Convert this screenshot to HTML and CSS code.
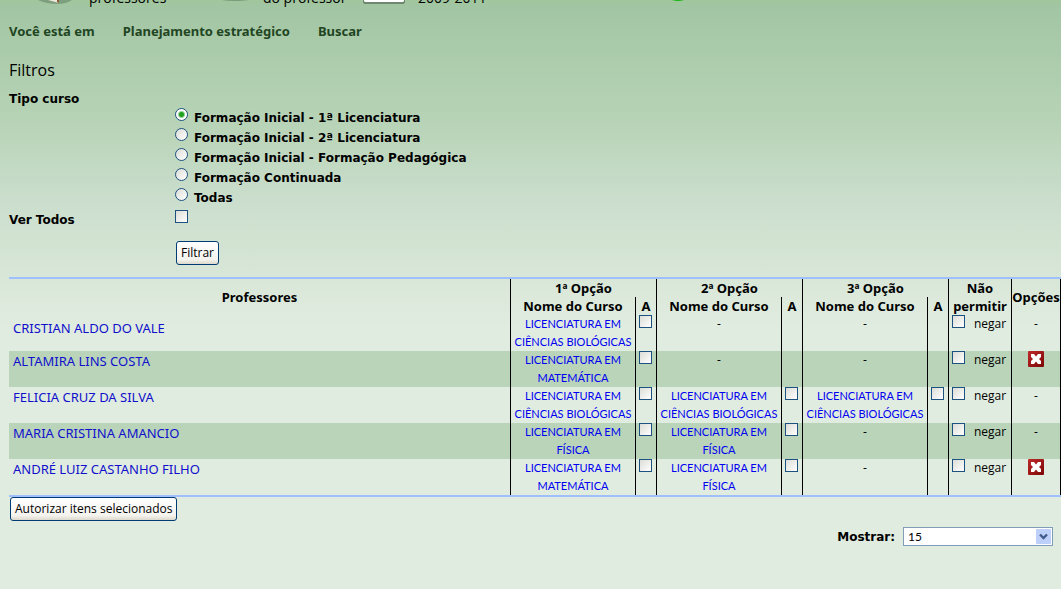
FILE: index.html
```
<!DOCTYPE html>
<html lang="pt-BR">
<head>
<meta charset="utf-8">
<title>Planejamento estratégico - Buscar</title>
<link rel="stylesheet" href="styles.css">
</head>
<body>
<svg class="defs" width="0" height="0" aria-hidden="true">
  <defs>
    <linearGradient id="red" x1="0" y1="0" x2="1" y2="1"><stop offset="0" stop-color="#c02a2a"/><stop offset="1" stop-color="#7c0606"/></linearGradient>
    <symbol id="delete" viewBox="0 0 16 16">
      <rect width="16" height="16" rx="1" fill="url(#red)"/>
      <path d="M3 3h3l2 2.500L10 3h3v3l-2 2L13 10v3h-3L8 10.500 6 13H3v-3l2-2L3 6z" fill="#fff"/>
    </symbol>
  </defs>
</svg>
<header class="banner">
  <svg class="banner-icon" width="79" height="8" viewBox="0 0 79 8" aria-hidden="true">
    <path d="M28 0h34q-6 4-14 4Q36 4 28 0z" fill="#6f8f70" opacity=".7"/>
    <path d="M38 0h11v3z" fill="#eee8dc"/><path d="M47 0h2v3l-2-1z" fill="#8a5a34"/>
  </svg>
  <span class="banner-text">professores</span>
  <svg class="banner-icon" width="76" height="8" viewBox="0 0 76 8" aria-hidden="true"><path d="M34 0h28q-14 2-28 0z" fill="#6f8f70" opacity=".8"/></svg>
  <span class="banner-text">do professor</span>
  <svg class="banner-icon" width="50" height="8" viewBox="0 0 50 8" aria-hidden="true"><path d="M4 0v2q0 2 3 2h36q3 0 3-2V0z" fill="#6f8970"/><path d="M5 0v1q0 1 2 1h36q2 0 2-1V0z" fill="#fff"/></svg>
  <span class="banner-text">2009-2011</span>
  <svg class="banner-icon" width="20" height="8" viewBox="0 0 20 8" aria-hidden="true"><path d="M4 0h12q-6 2-12 0z" fill="#14b814"/></svg>
</header>
<nav class="crumbs" aria-label="Você está em">
  <span>Você está em</span>
  <a href="#plan">Planejamento estratégico</a>
  <a href="#buscar">Buscar</a>
</nav>
<main>
  <form class="filters">
    <h1>Filtros</h1>
    <fieldset class="field">
      <legend>Tipo curso</legend>
      <div class="choices">
        <label><input type="radio" name="tipo" checked><span>Formação Inicial - 1ª Licenciatura</span></label>
        <label><input type="radio" name="tipo"><span>Formação Inicial - 2ª Licenciatura</span></label>
        <label><input type="radio" name="tipo"><span>Formação Inicial - Formação Pedagógica</span></label>
        <label><input type="radio" name="tipo"><span>Formação Continuada</span></label>
        <label><input type="radio" name="tipo"><span>Todas</span></label>
      </div>
    </fieldset>
    <div class="row">
      <label for="todos">Ver Todos</label>
      <input type="checkbox" id="todos">
    </div>
    <div class="submit"><button type="button">Filtrar</button></div>
  </form>
  <form class="results">
    <table>
      <colgroup><col><col class="c-course"><col class="c-a"><col class="c-course"><col class="c-a"><col class="c-course"><col class="c-a"><col class="c-deny"><col class="c-opt"></colgroup>
      <thead>
        <tr><th rowspan="2">Professores</th><th colspan="2">1ª Opção</th><th colspan="2">2ª Opção</th><th colspan="2">3ª Opção</th><th rowspan="2">Não permitir</th><th rowspan="2">Opções</th></tr>
        <tr><th>Nome do Curso</th><th>A</th><th>Nome do Curso</th><th>A</th><th>Nome do Curso</th><th>A</th></tr>
      </thead>
      <tbody>
        <tr><td class="name"><a href="#p1">CRISTIAN ALDO DO VALE</a></td>
          <td><a href="#c">LICENCIATURA EM CIÊNCIAS BIOLÓGICAS</a></td><td class="tick"><input type="checkbox" aria-label="Autorizar 1ª opção"></td>
          <td>-</td><td></td><td>-</td><td></td>
          <td class="deny"><label><input type="checkbox"><span>negar</span></label></td><td>-</td></tr>
        <tr><td class="name"><a href="#p2">ALTAMIRA LINS COSTA</a></td>
          <td><a href="#c">LICENCIATURA EM MATEMÁTICA</a></td><td class="tick"><input type="checkbox" aria-label="Autorizar 1ª opção"></td>
          <td>-</td><td></td><td>-</td><td></td>
          <td class="deny"><label><input type="checkbox"><span>negar</span></label></td><td><button type="button" class="remove" aria-label="Remover"><svg width="16" height="16"><use href="#delete"/></svg></button></td></tr>
        <tr><td class="name"><a href="#p3">FELICIA CRUZ DA SILVA</a></td>
          <td><a href="#c">LICENCIATURA EM CIÊNCIAS BIOLÓGICAS</a></td><td class="tick"><input type="checkbox" aria-label="Autorizar 1ª opção"></td>
          <td><a href="#c">LICENCIATURA EM CIÊNCIAS BIOLÓGICAS</a></td><td class="tick"><input type="checkbox" aria-label="Autorizar 2ª opção"></td>
          <td><a href="#c">LICENCIATURA EM CIÊNCIAS BIOLÓGICAS</a></td><td class="tick"><input type="checkbox" aria-label="Autorizar 3ª opção"></td>
          <td class="deny"><label><input type="checkbox"><span>negar</span></label></td><td>-</td></tr>
        <tr><td class="name"><a href="#p4">MARIA CRISTINA AMANCIO</a></td>
          <td><a href="#c">LICENCIATURA EM FÍSICA</a></td><td class="tick"><input type="checkbox" aria-label="Autorizar 1ª opção"></td>
          <td><a href="#c">LICENCIATURA EM FÍSICA</a></td><td class="tick"><input type="checkbox" aria-label="Autorizar 2ª opção"></td>
          <td>-</td><td></td>
          <td class="deny"><label><input type="checkbox"><span>negar</span></label></td><td>-</td></tr>
        <tr><td class="name"><a href="#p5">ANDRÉ LUIZ CASTANHO FILHO</a></td>
          <td><a href="#c">LICENCIATURA EM MATEMÁTICA</a></td><td class="tick"><input type="checkbox" aria-label="Autorizar 1ª opção"></td>
          <td><a href="#c">LICENCIATURA EM FÍSICA</a></td><td class="tick"><input type="checkbox" aria-label="Autorizar 2ª opção"></td>
          <td>-</td><td></td>
          <td class="deny"><label><input type="checkbox"><span>negar</span></label></td><td><button type="button" class="remove" aria-label="Remover"><svg width="16" height="16"><use href="#delete"/></svg></button></td></tr>
      </tbody>
    </table>
    <button type="button" class="authorize">Autorizar itens selecionados</button>
    <div class="pager">
      <label for="mostrar">Mostrar:</label>
      <div class="select">
        <select id="mostrar"><option>15</option><option>30</option></select>
        <svg class="arrow" width="15" height="15" viewBox="0 0 15 15" aria-hidden="true"><rect width="15" height="15" rx="1" fill="#bdd0fa"/><path d="M4 5.500l3.500 3.500L11 5.500" fill="none" stroke="#405a8c" stroke-width="2.400"/></svg>
      </div>
    </div>
  </form>
</main>
</body>
</html>
```
FILE: styles.css
```
* { box-sizing: border-box; }
body {
  margin: 0;
  min-height: 100vh;
  font: 12px/18px "Open Sans", sans-serif;
  color: #000;
  background: #e1ece0 linear-gradient(#a1c69c 0, #a2c5a4 8px, #a8caa9 40px, #b9d4b8 130px, #cbdecd 200px, #d6e5d5 265px, #e1ece0 328px) no-repeat;
}
.defs { position: absolute; }
a { color: #0000f0; text-decoration: none; }
.banner {
  display: grid;
  grid-template-columns: 79px 98px 76px 96px 59px 250px 20px;
  grid-template-rows: 8px;
  padding-left: 10px;
}
.banner-text {
  font: 14px/20px "Open Sans", sans-serif;
  align-self: end;
  white-space: nowrap;
}
.crumbs {
  display: flex;
  gap: 28px;
  padding: 14px 9px 0;
  font: bold 13px/18px "Noto Sans", sans-serif;
  color: #1f4522;
}
.crumbs a { color: inherit; }
.filters {
  padding: 19px 9px 12px;
  font: bold 12px/20px "DejaVu Sans", sans-serif;
}
h1 { margin: 0 0 9px; font: 16px/22px "Open Sans", sans-serif; }
.field { margin: 0; padding: 0; border: 0; }
legend { padding: 0; line-height: 18px; }
.choices { display: grid; padding: 0 0 2px 166px; }
.choices label { display: flex; gap: 6px; }
input {
  appearance: none;
  flex: none;
  display: block;
  width: 13px;
  height: 13px;
  margin: 0;
  border: 1px solid #1c5180;
  background: linear-gradient(135deg, #dcdcd7, #fff);
}
input[type="radio"] { border-radius: 50%; }
input[type="radio"]:checked { background: radial-gradient(circle, #21a121 0 2px, #fff 4px); }
.row { display: grid; grid-template-columns: 160px auto; column-gap: 6px; justify-content: start; }
.submit { padding: 11px 0 0 167px; }
button {
  display: block;
  height: 24px;
  padding: 0 4px;
  border: 1px solid #003c74;
  border-radius: 3px;
  background: linear-gradient(#fff, #f4f3ee 80%, #dcd8cc);
  font: 12px/18px "Open Sans", sans-serif;
  color: #000;
}
.results { padding-left: 9px; }
table {
  width: 100%;
  table-layout: fixed;
  border-collapse: separate;
  border-spacing: 0;
  border-top: 2px solid #9fbfff;
  border-bottom: 2px solid #9fbfff;
}
.c-course { width: 125px; }
.c-a { width: 21px; }
.c-deny { width: 63px; }
.c-opt { width: 50px; }
th, td { height: 18px; padding: 0; text-align: center; vertical-align: top; border-left: 1px solid #000; }
th { font: bold 13px/18px "Noto Sans", sans-serif; vertical-align: middle; }
td:first-child, th[rowspan]:first-child { border-left: 0; }
thead tr:first-child > :last-child, td:last-child { border-right: 1px solid #000; }
td { height: 36px; }
td a { font: 11px/18px Lato, sans-serif; }
tbody tr:nth-child(even) { background: #b9d4b8; }
.name { padding: 0 4px; text-align: left; }
.name a { display: block; color: #1010cc; font: 13px/20px "Noto Sans", sans-serif; }
tbody tr:first-child .name { padding-top: 3px; }
.tick { padding-left: 3px; }
.deny label { display: flex; gap: 9px; padding-left: 3px; }
.remove { width: 16px; height: 16px; margin: 0 auto; padding: 0; border: 0; background: none; }
.remove svg { display: block; }
.authorize { margin-left: 1px; }
.pager {
  display: flex;
  justify-content: flex-end;
  align-items: center;
  gap: 8px;
  padding: 6px 8px 0 0;
  font: bold 12px/18px "DejaVu Sans", sans-serif;
}
.select { position: relative; width: 150px; }
select {
  appearance: none;
  display: block;
  width: 100%;
  height: 19px;
  padding: 0 4px;
  border: 1px solid #7f9db9;
  border-radius: 0;
  background: #fff;
  font: 12px/17px Lato, sans-serif;
  color: #000;
}
.arrow { position: absolute; top: 2px; right: 2px; pointer-events: none; }
```
